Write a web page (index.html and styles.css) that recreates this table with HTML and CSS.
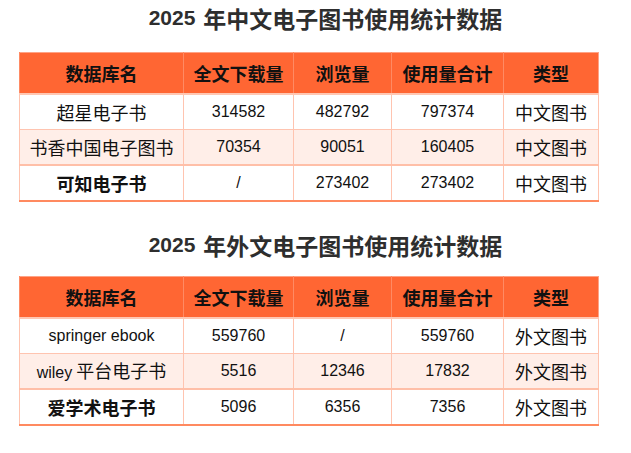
FILE: index.html
```html
<!DOCTYPE html>
<html lang="zh-CN">
<head>
<meta charset="utf-8">
<title>2025 电子图书使用统计数据</title>
<link rel="stylesheet" href="styles.css">
</head>
<body>
<main class="page">
  <section class="block">
    <h2 class="title"><span class="year">2025</span> 年中文电子图书使用统计数据</h2>
    <table class="stats">
      <colgroup>
        <col class="c1"><col class="c2"><col class="c3"><col class="c4"><col class="c5">
      </colgroup>
      <thead>
        <tr><th>数据库名</th><th>全文下载量</th><th>浏览量</th><th>使用量合计</th><th>类型</th></tr>
      </thead>
      <tbody>
        <tr><td>超星电子书</td><td class="num">314582</td><td class="num">482792</td><td class="num">797374</td><td>中文图书</td></tr>
        <tr class="alt"><td>书香中国电子图书</td><td class="num">70354</td><td class="num">90051</td><td class="num">160405</td><td>中文图书</td></tr>
        <tr><td class="strong">可知电子书</td><td class="num">/</td><td class="num">273402</td><td class="num">273402</td><td>中文图书</td></tr>
      </tbody>
    </table>
  </section>
  <section class="block second">
    <h2 class="title"><span class="year">2025</span> 年外文电子图书使用统计数据</h2>
    <table class="stats">
      <colgroup>
        <col class="c1"><col class="c2"><col class="c3"><col class="c4"><col class="c5">
      </colgroup>
      <thead>
        <tr><th>数据库名</th><th>全文下载量</th><th>浏览量</th><th>使用量合计</th><th>类型</th></tr>
      </thead>
      <tbody>
        <tr><td class="latin">springer ebook</td><td class="num">559760</td><td class="num">/</td><td class="num">559760</td><td>外文图书</td></tr>
        <tr class="alt"><td><span class="latin">wiley</span> 平台电子书</td><td class="num">5516</td><td class="num">12346</td><td class="num">17832</td><td>外文图书</td></tr>
        <tr><td class="strong">爱学术电子书</td><td class="num">5096</td><td class="num">6356</td><td class="num">7356</td><td>外文图书</td></tr>
      </tbody>
    </table>
  </section>
</main>
</body>
</html>
```
FILE: styles.css
```css
html, body {
  margin: 0;
  padding: 0;
  background: #ffffff;
}

.page {
  width: 631px;
  font-family: "Liberation Sans", "Noto Sans CJK SC", sans-serif;
  color: #111;
}

.block {
  display: block;
}

.title {
  display: flex;
  align-items: center;
  justify-content: center;
  gap: 8px;
  height: 28px;
  margin: 4px 0 20px 0;
  padding-left: 20px;
  font-family: "Noto Sans CJK SC", "Liberation Sans", sans-serif;
  font-size: 23px;
  font-weight: 700;
  line-height: 28px;
  color: #2e2e2e;
}

.title .year {
  font-family: "Liberation Sans", sans-serif;
  font-size: 21px;
}

.second .title {
  margin-top: 29px;
  margin-bottom: 17px;
}

.stats {
  margin-left: 19px;
  width: 579px;
  border-collapse: collapse;
  table-layout: fixed;
  border: 1px solid #ffa386;
  border-bottom: 2px solid #ff8a60;
}

.c1 { width: 164px; }
.c2 { width: 110px; }
.c3 { width: 98px; }
.c4 { width: 112px; }
.c5 { width: 95px; }

.stats th {
  height: 40px;
  padding: 0;
  background: #ff6633;
  color: #111;
  font-family: "Noto Sans CJK SC", sans-serif;
  font-size: 18px;
  font-weight: 700;
  text-align: center;
  border-left: 1px solid #ff8a63;
  border-bottom: 2px solid #ffc7b3;
  line-height: 20px;
}

.stats td {
  height: 34px;
  padding: 0;
  text-align: center;
  font-family: "Noto Sans CJK SC", sans-serif;
  font-size: 18px;
  font-weight: 400;
  line-height: 20px;
  color: #111;
  border: 1px solid #ffc4b0;
  background: #ffffff;
}

.stats tr.alt td {
  background: #ffeee8;
  border-bottom: 2px solid #ffbfa8;
}

.stats td.num,
.stats .latin {
  font-family: "Liberation Sans", sans-serif;
  font-size: 16px;
}

.stats td.strong {
  font-weight: 700;
}
```
